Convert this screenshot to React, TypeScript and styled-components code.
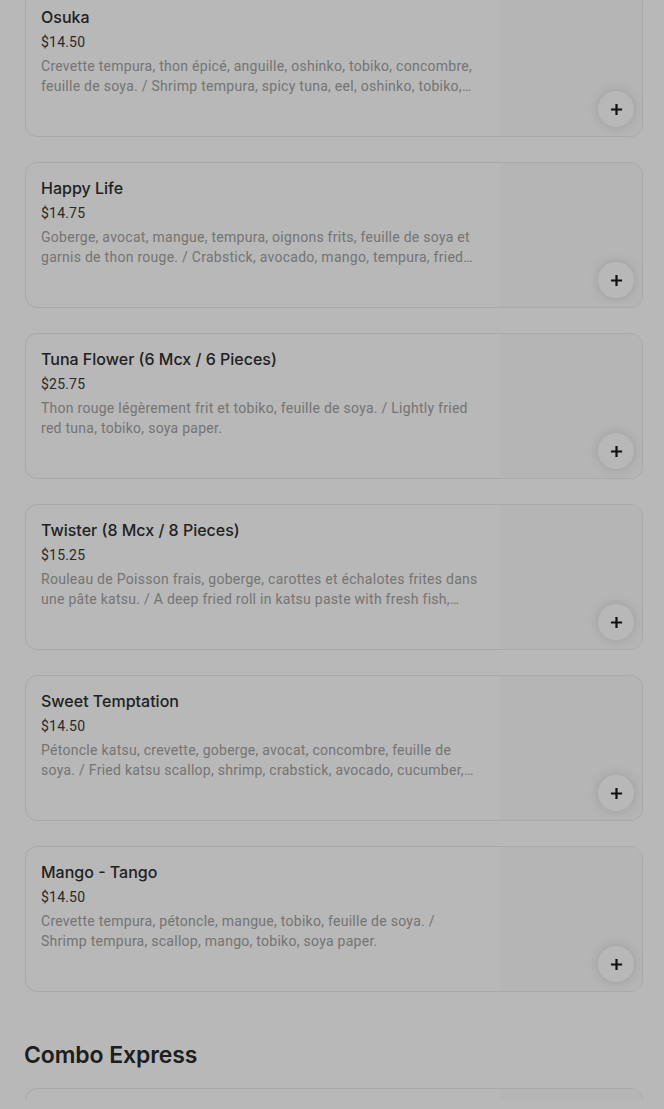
import React from 'react';
import styled, { createGlobalStyle } from 'styled-components';

const GlobalStyle = createGlobalStyle`
  * {
    box-sizing: border-box;
  }
  body {
    margin: 0;
    background: #ffffff;
    font-family: Inter, 'Liberation Sans', sans-serif;
    overflow: hidden;
  }
`;

const Page = styled.div`
  height: 1109px;
  overflow: hidden;
  padding: 0 21px 0 25px;
  margin-top: -9px;
`;

const List = styled.div`
  display: flex;
  flex-direction: column;
  gap: 25px;
`;

const Card = styled.div`
  height: 146px;
  display: grid;
  grid-template-columns: 1fr 142px;
  border: 1px solid #ebebeb;
  border-radius: 12px;
  overflow: hidden;
  background: #fff;
`;

const Info = styled.div`
  padding: 13px 20px 0 15px;
  min-width: 0;
`;

const Title = styled.div`
  font-size: 16px;
  line-height: 24px;
  font-weight: 500;
  color: #2e2e2e;
`;

const Price = styled.div`
  margin-top: 3px;
  font-family: Roboto, sans-serif;
  font-size: 14px;
  line-height: 20px;
  letter-spacing: 0.2px;
  color: #3a3a3a;
`;

const Description = styled.div`
  margin-top: 4px;
  font-family: Roboto, sans-serif;
  font-size: 14px;
  line-height: 20px;
  letter-spacing: 0.27px;
  color: #a2a2a2;
  display: -webkit-box;
  -webkit-line-clamp: 2;
  -webkit-box-orient: vertical;
  overflow: hidden;
`;

const Thumb = styled.div`
  position: relative;
  background: #fbfbfb;
`;

const AddButton = styled.button`
  position: absolute;
  right: 8px;
  bottom: 9px;
  width: 36px;
  height: 36px;
  border-radius: 50%;
  border: none;
  padding: 0;
  display: flex;
  align-items: center;
  justify-content: center;
  background: #fff;
  box-shadow: 0 0 12px rgba(0, 0, 0, 0.14);
  cursor: pointer;
`;

const SectionTitle = styled.h2`
  margin: 47px 0 17px -1px;
  font-size: 23px;
  line-height: 32px;
  font-weight: 600;
  letter-spacing: -0.1px;
  color: #2a2a2a;
`;

const Backdrop = styled.div`
  position: fixed;
  inset: 0;
  background: rgba(0, 0, 0, 0.28);
`;

type Item = { name: string; price: string; description: string };

const rolls: Item[] = [
  {
    name: 'Osuka',
    price: '$14.50',
    description:
      'Crevette tempura, thon épicé, anguille, oshinko, tobiko, concombre, feuille de soya. / Shrimp tempura, spicy tuna, eel, oshinko, tobiko, cucumber, soya paper.',
  },
  {
    name: 'Happy Life',
    price: '$14.75',
    description:
      'Goberge, avocat, mangue, tempura, oignons frits, feuille de soya et garnis de thon rouge. / Crabstick, avocado, mango, tempura, fried onions, soya paper, topped with red tuna.',
  },
  {
    name: 'Tuna Flower (6 Mcx / 6 Pieces)',
    price: '$25.75',
    description:
      'Thon rouge légèrement frit et tobiko, feuille de soya. / Lightly fried red tuna, tobiko, soya paper.',
  },
  {
    name: 'Twister (8 Mcx / 8 Pieces)',
    price: '$15.25',
    description:
      'Rouleau de Poisson frais, goberge, carottes et échalotes frites dans une pâte katsu. / A deep fried roll in katsu paste with fresh fish, crabstick, carrots and shallots.',
  },
  {
    name: 'Sweet Temptation',
    price: '$14.50',
    description:
      'Pétoncle katsu, crevette, goberge, avocat, concombre, feuille de soya. / Fried katsu scallop, shrimp, crabstick, avocado, cucumber, soya paper.',
  },
  {
    name: 'Mango - Tango',
    price: '$14.50',
    description:
      'Crevette tempura, pétoncle, mangue, tobiko, feuille de soya. / Shrimp tempura, scallop, mango, tobiko, soya paper.',
  },
];

const combos: Item[] = [
  {
    name: 'Combo Express 27 Mcx (27 Pieces)',
    price: '$39.95',
    description: 'Assortiment de makis. / Assorted makis.',
  },
];

const PlusIcon = () => (
  <svg width="13" height="13" viewBox="0 0 14 14">
    <path d="M7 1v12M1 7h12" stroke="#1a1a1a" strokeWidth="2.4" />
  </svg>
);

const MenuCard = ({ item }: { item: Item }) => (
  <Card>
    <Info>
      <Title>{item.name}</Title>
      <Price>{item.price}</Price>
      <Description>{item.description}</Description>
    </Info>
    <Thumb>
      <AddButton aria-label="Add">
        <PlusIcon />
      </AddButton>
    </Thumb>
  </Card>
);

export default function App() {
  return (
    <>
      <GlobalStyle />
      <Page>
        <List>
          {rolls.map((item) => (
            <MenuCard key={item.name} item={item} />
          ))}
        </List>
        <SectionTitle>Combo Express</SectionTitle>
        <List>
          {combos.map((item) => (
            <MenuCard key={item.name} item={item} />
          ))}
        </List>
      </Page>
      <Backdrop />
    </>
  );
}
